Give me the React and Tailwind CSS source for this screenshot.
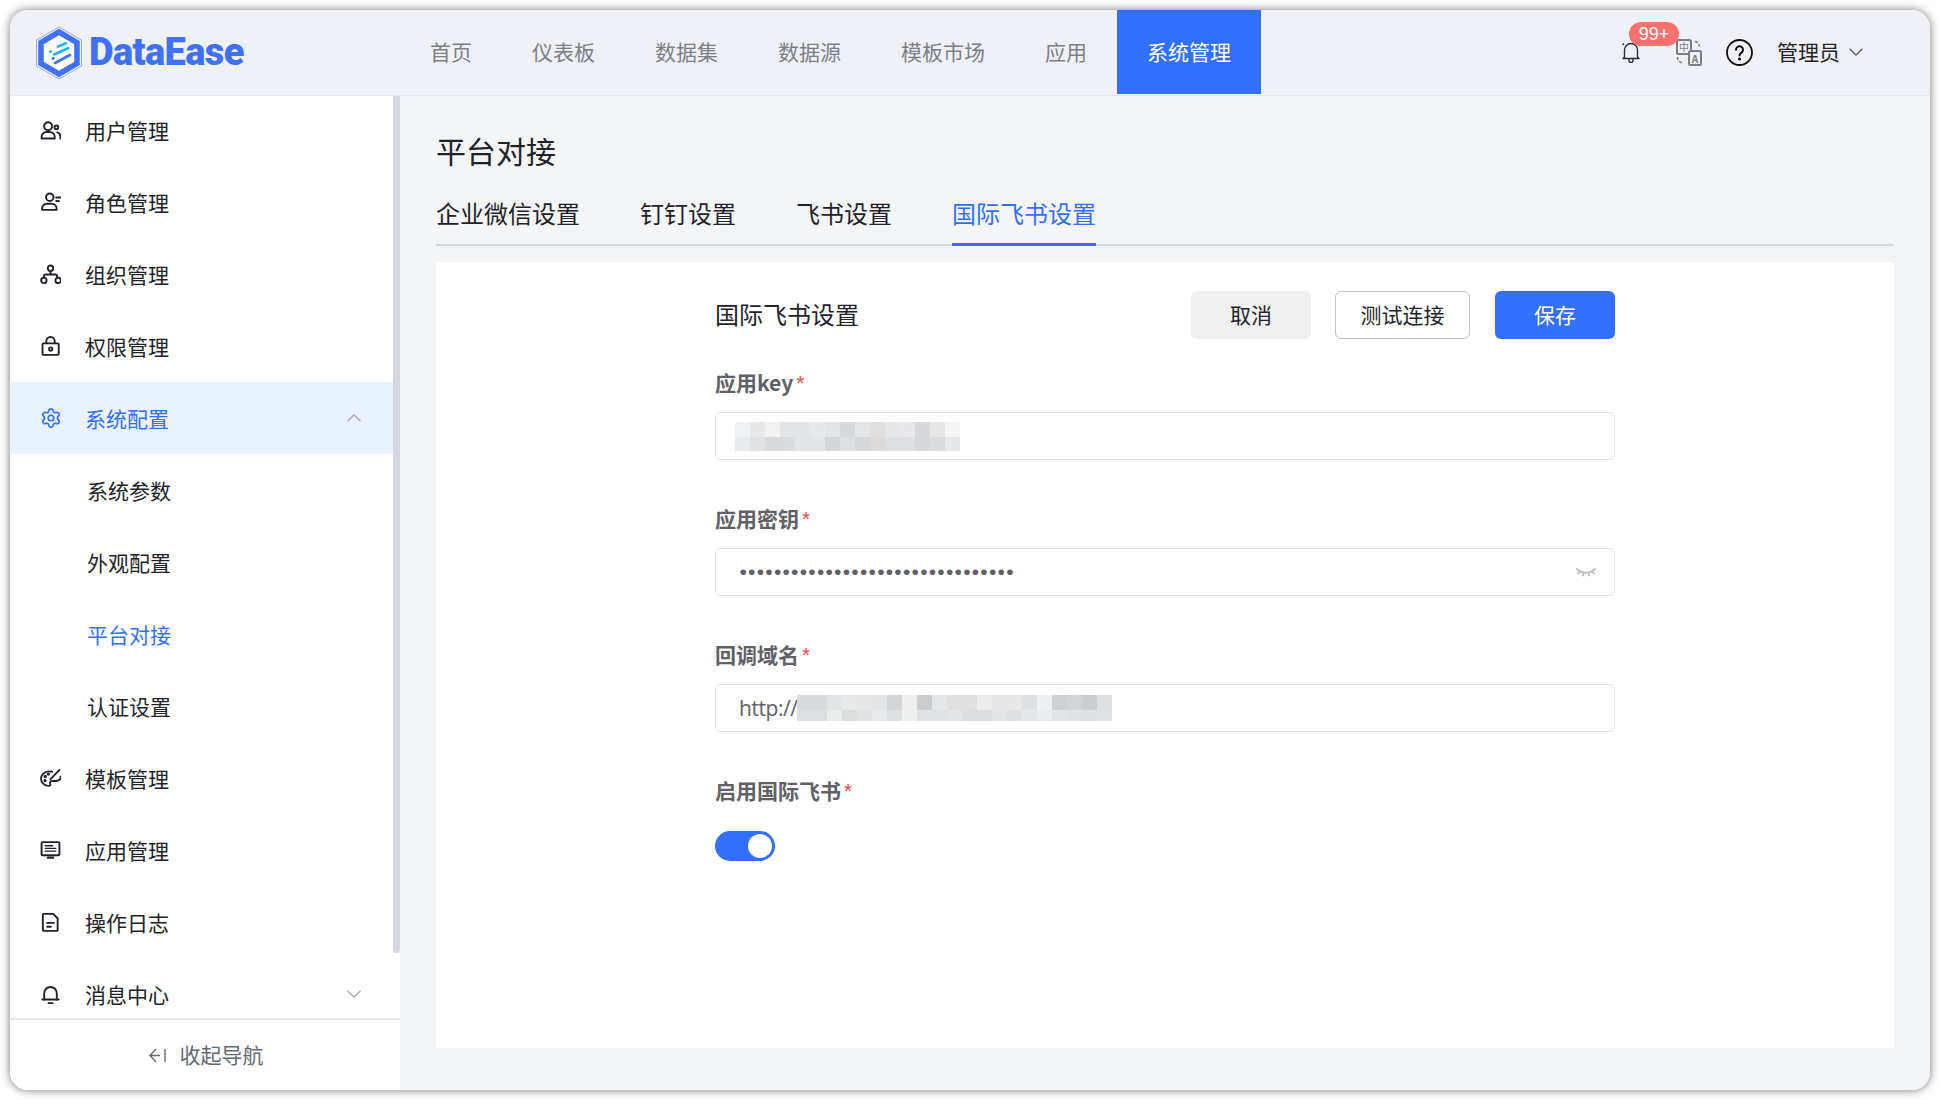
import React from 'react';
import { Settings } from 'lucide-react';

const navItems = ['首页', '仪表板', '数据集', '数据源', '模板市场', '应用', '系统管理'];
const tabs = ['企业微信设置', '钉钉设置', '飞书设置', '国际飞书设置'];

const keyBlur = [
  ['#f1f2f3', '#e7e8e9', '#f2f2f3', '#e3e4e5', '#e3e4e5', '#e7e8e9', '#e3e4e6', '#d8d9da', '#e3e5e7', '#e0dfde', '#e5e6e8', '#e8e8ea', '#d7d9dc', '#e6e6e7', '#f5f5f6'],
  ['#e9eaeb', '#e0e2e3', '#d9dadc', '#dadbdc', '#e3e4e5', '#e3e4e5', '#d5d6d8', '#dedfe0', '#d7d8db', '#dddbd9', '#dedfe1', '#dedfe1', '#d6d8dc', '#dbdcdd', '#e7e8ea'],
];
const urlBlur = [
  ['#d9dadb', '#d9dadb', '#e3e4e5', '#e8e9ea', '#e6e6e7', '#e3e4e5', '#d4d5d6', '#eeeeef', '#cbcccd', '#e5e6e7', '#e0e0e1', '#e0e0e1', '#ececed', '#e4e5e6', '#e8e8e9', '#dfe0e1', '#eeeff0', '#cfd0d1', '#d3d4d5', '#cccdce', '#dfe0e1'],
  ['#dedfe0', '#dedfe0', '#ebecec', '#dcdddd', '#e1e2e3', '#e9eaeb', '#dedfe0', '#eeefef', '#e0e1e2', '#e0e1e2', '#e3e4e5', '#dcdde0', '#dcdde0', '#e3e4e5', '#dfe0e1', '#e6e7e8', '#ebeced', '#e3e4e5', '#e0e1e2', '#dfe0e1', '#e0e1e2'],
];

function Icon({ children, className = 'text-[#1f2329]' }) {
  return (
    <svg width="21" height="21" viewBox="0 0 20 20" fill="none" stroke="currentColor" strokeWidth="1.800" strokeLinecap="round" strokeLinejoin="round" className={`shrink-0 ${className}`}>
      {children}
    </svg>
  );
}

const UsersIcon = () => (
  <Icon>
    <circle cx="7.700" cy="6" r="3.800" />
    <path d="M1.500 17.600v-1.400a4.800 4.800 0 0 1 4.800-4.800h2.900a4.800 4.800 0 0 1 4.800 4.800v1.400z" />
    <circle cx="15.600" cy="7" r="1.800" />
    <path d="M16.400 11.800a3.800 3.800 0 0 1 3 3.600v2.200" />
  </Icon>
);
const RoleIcon = () => (
  <Icon>
    <circle cx="9.300" cy="5" r="3.600" />
    <path d="M2 17v-1.200a4.600 4.600 0 0 1 4.600-4.600h4.600a4.600 4.600 0 0 1 4.600 4.600V17z" />
    <path d="M15.400 5.300h4M15.400 8.600h2.600" />
  </Icon>
);
const OrgIcon = () => (
  <Icon>
    <circle cx="10" cy="4" r="2.600" />
    <circle cx="3.700" cy="15.600" r="2.600" />
    <circle cx="17.300" cy="15.600" r="2.600" />
    <path d="M10 6.600v3.400M3.700 13v-1.400A1.600 1.600 0 0 1 5.300 10h9.400a1.600 1.600 0 0 1 1.600 1.600V13" />
  </Icon>
);
const LockIcon = () => (
  <Icon>
    <rect x="2.400" y="7" width="15.400" height="11" rx="0.800" />
    <path d="M6 7V5a4 4 0 0 1 8 0v2" />
    <circle cx="10.200" cy="12.400" r="1.600" />
  </Icon>
);
const PaletteIcon = () => (
  <Icon>
    <path d="M11.500 3.600C6 2 1 5.600 1 10.400c0 3.800 3.500 6.600 7.200 6.600 1.500 0 1.900-1 1.500-2.200-.5-1.400.3-2.400 1.800-2.400h3.500c2.800 0 5-1.700 4.600-4.200" />
    <path d="M10 10.600 18.600 1.800" />
    <circle cx="5" cy="8" r=".7" />
    <circle cx="8" cy="5.800" r=".7" />
    <circle cx="4.800" cy="12" r=".7" />
  </Icon>
);
const ScreenIcon = () => (
  <Icon>
    <rect x="1.500" y="2" width="17" height="12.500" rx="0.800" />
    <path d="M5 5.500h7M5 8h10M5 10.600h10" strokeWidth="1.300" />
    <path d="M7.500 16.800h5" strokeWidth="2.200" />
  </Icon>
);
const DocIcon = () => (
  <Icon>
    <path d="M3.500 1.800h9L16.800 6v11.200a.8.8 0 0 1-.8.8H3.500a.8.8 0 0 1-.8-.8V2.600a.8.8 0 0 1 .8-.8z" />
    <path d="M6.800 10.400h6.400M6.800 14h3.600" />
  </Icon>
);
const BellIcon = () => (
  <Icon>
    <path d="M4 14.800V8.800a6 6 0 0 1 12 0v6" />
    <path d="M2.200 14.800h15.600M8 18.200h4" />
  </Icon>
);

function Chevron({ up, className = 'text-[#a9adb3]' }) {
  return (
    <svg width="14" height="8" viewBox="0 0 14 8" fill="none" stroke="currentColor" strokeWidth="1.300" className={className}>
      <path d={up ? 'M.5 7.300 7 1l6.500 6.300' : 'M.5.700 7 7l6.500-6.300'} />
    </svg>
  );
}

function DataEaseLogo() {
  return (
    <svg width="48" height="54" viewBox="0 0 48 54" fill="none" className="shrink-0">
      <path d="M24 1 46.500 14v26L24 53 1.500 40V14z" stroke="#8fabf8" strokeWidth="1" />
      <path d="M24 6 42 16.500v21L24 48 6 37.500v-21z" fill="#fff" stroke="#4070f4" strokeWidth="5.500" />
      <path d="M23 20.500 31 17.200" stroke="#1bb8f5" strokeWidth="2.600" strokeLinecap="round" />
      <path d="M15.200 25.800 16 25.500M19 28.500 33 22.200" stroke="#1bb8f5" strokeWidth="2.600" strokeLinecap="round" />
      <path d="M17.800 32.500 18.500 32.200M20 37 35 29" stroke="#4070f4" strokeWidth="2.600" strokeLinecap="round" />
    </svg>
  );
}

function MenuRow({ icon, label, active, chevron }) {
  return (
    <div className={`flex h-[72px] shrink-0 items-center pl-[30px] pr-[32px] ${active ? 'bg-[#ebf2ff] text-[#3370ff]' : 'text-[#1f2329]'}`}>
      {icon}
      <span className="ml-[24px] flex-1 pt-[2px] text-[21px]">{label}</span>
      {chevron}
    </div>
  );
}

function SubRow({ label, active }) {
  return (
    <div className={`flex h-[72px] shrink-0 items-center pl-[77px] pt-[2px] text-[21px] ${active ? 'text-[#3370ff]' : 'text-[#1f2329]'}`}>
      {label}
    </div>
  );
}

function Blur({ rows, heights }) {
  return (
    <div className="flex flex-col">
      {rows.map((row, i) => (
        <div key={i} className="flex">
          {row.map((color, j) => (
            <div key={j} className="w-[15px]" style={{ backgroundColor: color, height: heights[i] }} />
          ))}
        </div>
      ))}
    </div>
  );
}

function Field({ label, children }) {
  return (
    <div>
      <div className="mb-[14px] flex h-7 items-center pb-[2px] text-[21px] font-bold text-[#5f6166]">
        {label}
        <span className="ml-[3px] [font-family:'Liberation_Sans',sans-serif] text-[21px] font-normal text-[#f54a45]">*</span>
      </div>
      {children}
    </div>
  );
}

function InputBox({ children, className = 'pl-[18.5px]' }) {
  return (
    <div className={`flex h-12 items-center rounded-md border-[1.5px] border-[#dfe1e9] bg-white pr-[18px] ${className}`}>
      {children}
    </div>
  );
}

export default function App() {
  return (
    <div className="h-screen w-full bg-white p-[10px] [font-family:'Noto_Sans_CJK_SC',sans-serif]">
      <div className="flex h-full w-full flex-col overflow-hidden rounded-[18px] shadow-[0_0_10px_rgba(0,0,0,0.55)]">
        <header className="flex h-[86px] shrink-0 border-b border-[#e4e6ec] bg-[#f0f1f7]">
          <div className="flex w-[390px] shrink-0 items-center gap-[6px] pl-[25px]">
            <DataEaseLogo />
            <span className="[font-family:Roboto,sans-serif] text-[38px] font-black tracking-[-0.6px] text-[#4070f4]">DataEase</span>
          </div>
          <nav className="flex">
            {navItems.map((item) => (
              <div
                key={item}
                className={`flex h-[84px] items-center px-[30px] text-[21px] ${item === '系统管理' ? 'bg-[#3370ff] text-white' : 'text-[#7b7f87]'}`}
              >
                {item}
              </div>
            ))}
          </nav>
          <div className="ml-auto flex h-[84px] items-center pr-[67px]">
            <div className="relative">
              <svg width="20" height="22" viewBox="0 0 20 22" fill="none" stroke="#2a2d33" strokeWidth="1.400" strokeLinejoin="round">
                <path d="M3.500 16V9a6.500 6.500 0 0 1 13 0v7l1.500 1.500H2z" />
                <path d="M8 18v1.500a2 2 0 0 0 4 0V18M3 2.500 1.500 4M17 2.500 18.500 4" />
              </svg>
              <span className="absolute left-[8px] top-[-19px] flex h-[24px] w-[50px] items-center justify-center rounded-full bg-[#f87171] [font-family:'Liberation_Sans',sans-serif] text-[18px] text-white">99+</span>
            </div>
            <svg width="26" height="27" viewBox="0 0 26 27" fill="none" stroke="#7d7f84" strokeWidth="2" className="ml-[35px]">
              <rect x="1" y="1" width="14" height="14" rx="1.500" fill="#f0f1f7" />
              <text x="8" y="12" textAnchor="middle" fontSize="10" fill="#7d7f84" stroke="none">中</text>
              <rect x="13" y="12" width="12" height="14" rx="1.500" fill="#f0f1f7" />
              <text x="19" y="23.500" textAnchor="middle" fontSize="10" fontWeight="700" fill="#7d7f84" stroke="none">A</text>
              <path d="M19 2.500a6 6 0 0 1 4.500 5M1.500 18a6 6 0 0 0 5 6" strokeDasharray="3 1.500" strokeWidth="1.500" />
            </svg>
            <svg width="27" height="27" viewBox="0 0 27 27" fill="none" stroke="#111" strokeWidth="1.800" strokeLinecap="round" className="ml-[24px]">
              <circle cx="13.500" cy="13.500" r="12.500" />
              <path d="M10 10.800a3.500 3.500 0 1 1 5.500 2.800c-1.300.9-2 1.500-2 3" strokeWidth="2" />
              <circle cx="13.500" cy="20" r="0.700" fill="#111" />
            </svg>
            <span className="ml-[24px] text-[21px] text-[#1f2329]">管理员</span>
            <Chevron className="ml-[9px] text-[#5f6166]" />
          </div>
        </header>

        <div className="flex min-h-0 flex-1">
          <aside className="flex w-[390px] shrink-0 flex-col bg-white">
            <div className="flex h-[922px] min-h-0 shrink-0">
              <div className="-mt-[2px] flex flex-1 flex-col overflow-hidden">
                <MenuRow icon={<UsersIcon />} label="用户管理" />
                <MenuRow icon={<RoleIcon />} label="角色管理" />
                <MenuRow icon={<OrgIcon />} label="组织管理" />
                <MenuRow icon={<LockIcon />} label="权限管理" />
                <MenuRow
                  icon={<Settings size={22} strokeWidth={1.8} className="-mx-[0.5px] shrink-0" />}
                  label="系统配置"
                  active
                  chevron={<Chevron up />}
                />
                <SubRow label="系统参数" />
                <SubRow label="外观配置" />
                <SubRow label="平台对接" active />
                <SubRow label="认证设置" />
                <MenuRow icon={<PaletteIcon />} label="模板管理" />
                <MenuRow icon={<ScreenIcon />} label="应用管理" />
                <MenuRow icon={<DocIcon />} label="操作日志" />
                <MenuRow icon={<BellIcon />} label="消息中心" chevron={<Chevron />} />
              </div>
              <div className="w-[7px] shrink-0">
                <div className="h-[857px] rounded-b-md bg-[#d5d8e1]" />
              </div>
            </div>
            <div className="flex flex-1 items-center justify-center gap-[14px] border-t-2 border-[#e4e6ec] pl-[2px] text-[21px] text-[#646a73]">
              <svg width="17" height="15" viewBox="0 0 17 15" fill="none" stroke="currentColor" strokeWidth="1.400">
                <path d="M7 1 .9 7.500 7 14M1 7.500h10M16 1v13" />
              </svg>
              收起导航
            </div>
          </aside>

          <main className="flex min-w-0 flex-1 flex-col bg-[#f4f5f7] px-[36px] pb-[42px] pt-[34px]">
            <h1 className="h-10 text-[30px] leading-10 text-[#1f2329]">平台对接</h1>
            <div className="mt-[27px] flex h-[49px] gap-[60px] border-b-2 border-[#d5d6d9]">
              {tabs.map((tab) => (
                <div
                  key={tab}
                  className={`h-[49px] text-[24px] leading-8 ${tab === '国际飞书设置' ? 'border-b-[3px] border-[#3370ff] text-[#3370ff]' : 'text-[#1f2329]'}`}
                >
                  {tab}
                </div>
              ))}
            </div>
            <div className="mt-[16px] flex-1 bg-white pt-[29px]">
              <div className="mx-auto w-[900px]">
                <div className="flex h-12 items-center">
                  <div className="flex-1 pb-[2px] text-[24px] text-[#1f2329]">国际飞书设置</div>
                  <button className="h-12 w-[120px] rounded-md bg-[#f0f0f0] text-[21px] text-[#1f2329]">取消</button>
                  <button className="ml-[24px] h-12 w-[135px] rounded-md border-[1.5px] border-[#bfc1c5] bg-white text-[21px] text-[#1f2329]">测试连接</button>
                  <button className="ml-[25px] h-12 w-[120px] rounded-md bg-[#3370ff] text-[21px] text-white">保存</button>
                </div>

                <div className="mt-[31px] flex flex-col gap-[46px]">
                  <Field label="应用key">
                    <InputBox>
                      <Blur rows={keyBlur} heights={[15, 14]} />
                    </InputBox>
                  </Field>
                  <Field label="应用密钥">
                    <InputBox className="pl-[23.5px]">
                      <input
                        type="password"
                        readOnly
                        value="12345678901234567890123456789012"
                        className="min-w-0 flex-1 bg-transparent [font-family:'Liberation_Sans',sans-serif] text-[21px] tracking-[1.25px] text-[#5f6166] outline-none"
                      />
                      <svg width="20" height="12" viewBox="0 0 20 12" fill="none" stroke="#bbbfc4" strokeWidth="1.800" strokeLinecap="round">
                        <path d="M1 3c5 5 13 5 18 0M4 5 2 7.500M16 5l2 2.500M7.500 6.800 7 9.500M12.500 6.800 13 9.500" />
                      </svg>
                    </InputBox>
                  </Field>
                  <Field label="回调域名">
                    <InputBox className="pl-[23px]">
                      <span className="pt-[2px] [font-family:'Open_Sans',sans-serif] text-[21px] tracking-[-0.45px] text-[#5f6166]">http://</span>
                      <Blur rows={urlBlur} heights={[15, 11]} />
                    </InputBox>
                  </Field>
                  <Field label="启用国际飞书">
                    <div className="mt-[25px] flex h-[30px] w-[60px] items-center justify-end rounded-full bg-[#3370ff] pr-[3px]">
                      <div className="h-6 w-6 rounded-full bg-white" />
                    </div>
                  </Field>
                </div>
              </div>
            </div>
          </main>
        </div>
      </div>
    </div>
  );
}
